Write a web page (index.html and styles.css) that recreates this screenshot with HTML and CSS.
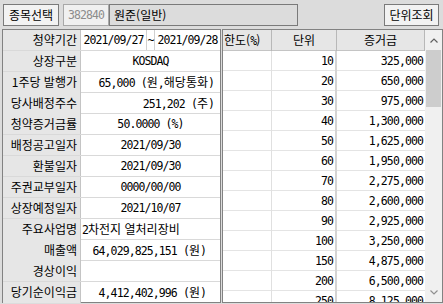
FILE: index.html
```html
<!DOCTYPE html>
<html lang="ko">
<head>
  <meta charset="UTF-8" />
  <title>공모주 청약 정보</title>
  <link rel="stylesheet" href="styles.css">
</head>
<body>
  <div class="top">
    <button class="btn">종목선택</button>
    <div class="code">382840</div>
    <div class="name">원준(일반)</div>
    <button class="btn btn-unit">단위조회</button>
  </div>

  <div class="main">
    <div class="info">
      <div class="row">
        <div class="label">청약기간</div>
        <div class="period">
          <div class="num">2021/09/27</div>
          <div class="num tilde">~</div>
          <div class="num">2021/09/28</div>
        </div>
      </div>
      <div class="row"><div class="label">상장구분</div><div class="val num">KOSDAQ</div></div>
      <div class="row"><div class="label">1주당 발행가</div><div class="val right num">65,000 (<span class="ko">원</span>,<span class="ko">해당통화</span>)</div></div>
      <div class="row"><div class="label">당사배정주수</div><div class="val right num">251,202 (<span class="ko">주</span>)</div></div>
      <div class="row"><div class="label">청약증거금률</div><div class="val num">50.0000 (%)</div></div>
      <div class="row"><div class="label">배정공고일자</div><div class="val num">2021/09/30</div></div>
      <div class="row"><div class="label">환불일자</div><div class="val num">2021/09/30</div></div>
      <div class="row"><div class="label">주권교부일자</div><div class="val num">0000/00/00</div></div>
      <div class="row"><div class="label">상장예정일자</div><div class="val num">2021/10/07</div></div>
      <div class="row"><div class="label">주요사업명</div><div class="val left"><span class="num">2</span>차전지 열처리장비</div></div>
      <div class="row"><div class="label">매출액</div><div class="val right wide num">64,029,825,151 (<span class="ko">원</span>)</div></div>
      <div class="row"><div class="label">경상이익</div><div class="val"></div></div>
      <div class="row"><div class="label">당기순이익금</div><div class="val right wide num">4,412,402,996 (<span class="ko">원</span>)</div></div>
    </div>

    <div class="units-panel">
      <div class="units">
        <div class="uhead">
          <div>한도(<span class="num">%</span>)</div>
          <div>단위</div>
          <div>증거금</div>
        </div>
        <div class="urow"><div></div><div>10</div><div>325,000</div></div>
        <div class="urow"><div></div><div>20</div><div>650,000</div></div>
        <div class="urow"><div></div><div>30</div><div>975,000</div></div>
        <div class="urow"><div></div><div>40</div><div>1,300,000</div></div>
        <div class="urow"><div></div><div>50</div><div>1,625,000</div></div>
        <div class="urow"><div></div><div>60</div><div>1,950,000</div></div>
        <div class="urow"><div></div><div>70</div><div>2,275,000</div></div>
        <div class="urow"><div></div><div>80</div><div>2,600,000</div></div>
        <div class="urow"><div></div><div>90</div><div>2,925,000</div></div>
        <div class="urow"><div></div><div>100</div><div>3,250,000</div></div>
        <div class="urow"><div></div><div>150</div><div>4,875,000</div></div>
        <div class="urow"><div></div><div>200</div><div>6,500,000</div></div>
        <div class="urow"><div></div><div>250</div><div>8,125,000</div></div>
      </div>
      <div class="scroll">
        <div class="arrow">
          <svg width="8" height="5" viewBox="0 0 8 5"><polyline points="0.5,4.5 4,1 7.5,4.5" fill="none" stroke="#606060" stroke-width="1.2"/></svg>
        </div>
        <div class="thumb"></div>
        <div class="arrow arrow-down">
          <svg width="8" height="5" viewBox="0 0 8 5"><polyline points="0.5,0.5 4,4 7.5,0.5" fill="none" stroke="#909090" stroke-width="1.2"/></svg>
        </div>
      </div>
    </div>
  </div>
</body>
</html>
```

FILE: styles.css
```css
body {
  margin: 0;
  width: 443px;
  height: 304px;
  overflow: hidden;
  background: #dcdcdc;
  color: #000;
  font: 12px "Noto Sans CJK KR", sans-serif;
}
.num {
  font-family: "DejaVu Sans Mono", "Noto Sans CJK KR", monospace;
  font-size: 11.5px;
  letter-spacing: -0.9px;
}
.ko {
  font-family: "Noto Sans CJK KR", sans-serif;
  font-size: 12px;
  letter-spacing: 0;
}

/* top bar */
.top {
  display: flex;
  align-items: center;
  height: 29px;
  padding: 0 3px;
  box-sizing: border-box;
}
.btn {
  width: 56px;
  height: 22px;
  padding: 0;
  border: 1px solid #7a7a7a;
  background: #f2f2f2;
  color: #000;
  font: 12px "Noto Sans CJK KR", sans-serif;
  line-height: 20px;
}
.btn-unit {
  width: 55px;
  margin-left: auto;
  margin-right: 1px;
}
.code {
  width: 46px;
  height: 22px;
  margin-left: 4px;
  box-sizing: border-box;
  border: 1px solid #a8a8a8;
  background: #f0f0f0;
  color: #8c8c8c;
  font-family: "DejaVu Sans Mono", monospace;
  font-size: 11.5px;
  letter-spacing: -0.9px;
  line-height: 20px;
  text-align: center;
}
.name {
  width: 189px;
  height: 22px;
  box-sizing: border-box;
  border: 1px solid #7a7a7a;
  padding-left: 4px;
  line-height: 20px;
}

/* left info table */
.main {
  display: flex;
  gap: 1px;
}
.info {
  width: 219px;
  height: 274px;
  margin-left: 2px;
  box-sizing: border-box;
  border: 1px solid #828282;
  background: #fff;
}
.row {
  display: grid;
  grid-template-columns: 78px 1fr;
  height: 20px;
  border-bottom: 1px solid #d9d9d9;
}
.row:last-child {
  border-bottom: 0;
}
.label {
  background: #e6e6e6;
  border-right: 1px solid #c4c4c4;
  text-align: right;
  padding-right: 3px;
  line-height: 20px;
  white-space: nowrap;
}
.val {
  line-height: 20px;
  text-align: center;
  white-space: nowrap;
}
.val.right {
  text-align: right;
  padding-right: 6px;
}
.val.right.wide {
  padding-right: 14px;
}
.val.left {
  text-align: left;
  padding-left: 1px;
}
.period {
  display: grid;
  grid-template-columns: 65px 9px 1fr;
  line-height: 20px;
  text-align: center;
}
.period .tilde {
  border-left: 1px solid #d0d0d0;
  border-right: 1px solid #d0d0d0;
}

/* right unit table */
.units-panel {
  display: flex;
  width: 221px;
  height: 274px;
  box-sizing: border-box;
  border: 1px solid #828282;
  background: #fff;
  overflow: hidden;
}
.units {
  width: 202px;
  flex: none;
}
.uhead,
.urow {
  display: grid;
  grid-template-columns: 49px 65px 88px;
}
.uhead {
  height: 20px;
  background: #e6e6e6;
  border-bottom: 1px solid #c4c4c4;
  line-height: 20px;
  text-align: center;
}
.uhead div {
  border-right: 1px solid #b8b8b8;
}
.uhead div:first-child {
  text-align: left;
  padding-left: 1px;
}
.urow {
  height: 19px;
  border-bottom: 1px solid #e4e4e4;
  line-height: 20px;
  text-align: right;
  font-family: "DejaVu Sans Mono", monospace;
  font-size: 11.5px;
  letter-spacing: -0.9px;
}
.urow div {
  padding-right: 2px;
}
.urow div:nth-child(1) {
  border-right: 1px solid #e0e0e0;
}
.urow div:nth-child(2) {
  border-right: 2px solid #d4d4d4;
}

/* scrollbar */
.scroll {
  flex: 1;
  display: flex;
  flex-direction: column;
  background: #f0f0f0;
}
.arrow {
  display: flex;
  align-items: center;
  justify-content: center;
  height: 20px;
}
.arrow-down {
  margin-top: auto;
  height: 19px;
}
.thumb {
  height: 57px;
  margin: 0 1px;
  background: #cdcdcd;
}
```
